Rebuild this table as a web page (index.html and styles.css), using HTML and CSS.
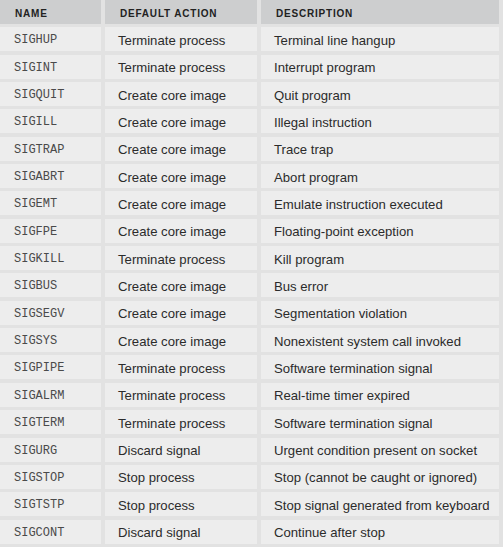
FILE: index.html
```html
<!DOCTYPE html>
<html>
<head>
<meta charset="utf-8">
<link rel="stylesheet" href="styles.css">
</head>
<body>
<div class="table">
  <div class="th">NAME</div><div class="th">DEFAULT ACTION</div><div class="th">DESCRIPTION</div>
  <div class="td name">SIGHUP</div><div class="td">Terminate process</div><div class="td">Terminal line hangup</div>
  <div class="td name">SIGINT</div><div class="td">Terminate process</div><div class="td">Interrupt program</div>
  <div class="td name">SIGQUIT</div><div class="td">Create core image</div><div class="td">Quit program</div>
  <div class="td name">SIGILL</div><div class="td">Create core image</div><div class="td">Illegal instruction</div>
  <div class="td name">SIGTRAP</div><div class="td">Create core image</div><div class="td">Trace trap</div>
  <div class="td name">SIGABRT</div><div class="td">Create core image</div><div class="td">Abort program</div>
  <div class="td name">SIGEMT</div><div class="td">Create core image</div><div class="td">Emulate instruction executed</div>
  <div class="td name">SIGFPE</div><div class="td">Create core image</div><div class="td">Floating-point exception</div>
  <div class="td name">SIGKILL</div><div class="td">Terminate process</div><div class="td">Kill program</div>
  <div class="td name">SIGBUS</div><div class="td">Create core image</div><div class="td">Bus error</div>
  <div class="td name">SIGSEGV</div><div class="td">Create core image</div><div class="td">Segmentation violation</div>
  <div class="td name">SIGSYS</div><div class="td">Create core image</div><div class="td">Nonexistent system call invoked</div>
  <div class="td name">SIGPIPE</div><div class="td">Terminate process</div><div class="td">Software termination signal</div>
  <div class="td name">SIGALRM</div><div class="td">Terminate process</div><div class="td">Real-time timer expired</div>
  <div class="td name">SIGTERM</div><div class="td">Terminate process</div><div class="td">Software termination signal</div>
  <div class="td name">SIGURG</div><div class="td">Discard signal</div><div class="td">Urgent condition present on socket</div>
  <div class="td name">SIGSTOP</div><div class="td">Stop process</div><div class="td">Stop (cannot be caught or ignored)</div>
  <div class="td name">SIGTSTP</div><div class="td">Stop process</div><div class="td">Stop signal generated from keyboard</div>
  <div class="td name">SIGCONT</div><div class="td">Discard signal</div><div class="td">Continue after stop</div>
</div>
</body>
</html>
```
FILE: styles.css
```css
html, body {
  margin: 0;
  padding: 0;
  background: #e2e2e2;
}
.table {
  display: grid;
  grid-template-columns: 101px 152px 238px;
  grid-auto-rows: 24px;
  column-gap: 4px;
  row-gap: 3.35px;
  width: 503px;
}
.th {
  background: #cdcecf;
  color: #222;
  font-family: "Liberation Sans", Arial, sans-serif;
  font-weight: bold;
  font-size: 10px;
  letter-spacing: 0.8px;
  display: flex;
  align-items: center;
  padding-left: 15px;
  padding-top: 2px;
  box-sizing: border-box;
}
.td {
  background: #ededed;
  color: #2b2b2b;
  font-family: "Liberation Sans", Arial, sans-serif;
  font-size: 13.15px;
  display: flex;
  align-items: center;
  padding-left: 13px;
  padding-top: 2px;
  box-sizing: border-box;
  white-space: nowrap;
}
.td.name {
  font-family: "Liberation Mono", "Courier New", monospace;
  font-size: 12px;
  color: #4a4a4a;
  padding-left: 14px;
  padding-top: 2px;
}
```
